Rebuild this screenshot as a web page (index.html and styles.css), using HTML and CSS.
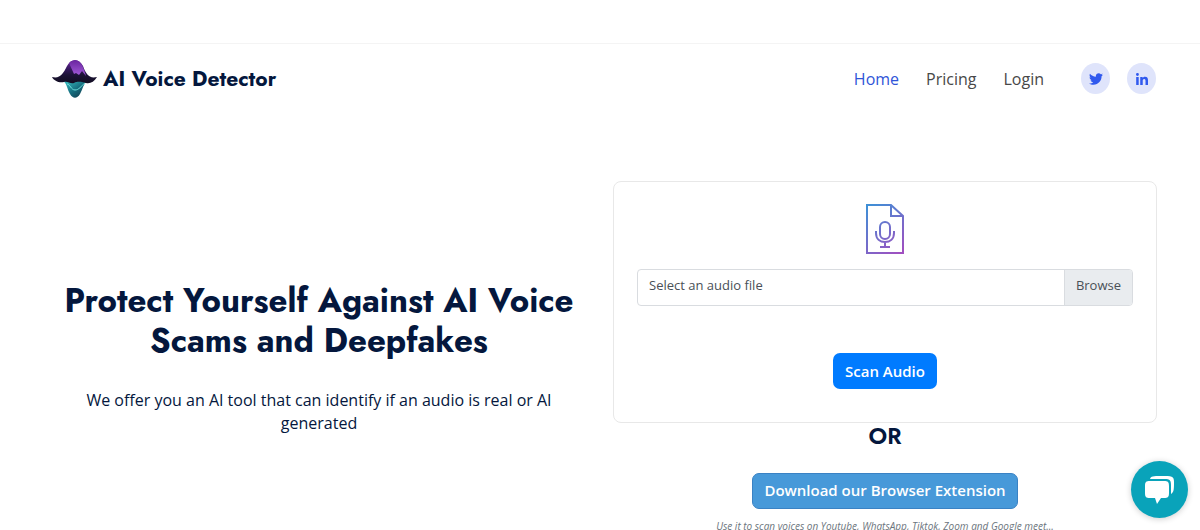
FILE: index.html
```html
<!DOCTYPE html>
<html lang="en">
<head>
  <meta charset="UTF-8" />
  <meta name="viewport" content="width=device-width, initial-scale=1.0" />
  <title>AI Voice Detector</title>
  <link rel="stylesheet" href="styles.css">
</head>
<body>
  <div class="topbar"></div>
  <header class="header">
    <a class="logo" href="#">
      <svg width="45" height="40" viewBox="0 0 45 40" aria-hidden="true">
        <defs>
          <linearGradient id="waveTop" x1="0" y1="0" x2="0" y2="1">
            <stop offset="0" stop-color="#6a259f" />
            <stop offset="0.4" stop-color="#34185c" />
            <stop offset="0.65" stop-color="#1c1336" />
            <stop offset="1" stop-color="#120d22" />
          </linearGradient>
          <linearGradient id="wavePeak" x1="0" y1="0" x2="0" y2="1">
            <stop offset="0" stop-color="#6a259f" />
            <stop offset="1" stop-color="#a45cdb" />
          </linearGradient>
          <linearGradient id="waveBottom" x1="0" y1="0" x2="1" y2="1">
            <stop offset="0" stop-color="#3fc9cb" />
            <stop offset="0.5" stop-color="#166f80" />
            <stop offset="1" stop-color="#102a3c" />
          </linearGradient>
        </defs>
        <path fill="url(#waveBottom)" d="M11 22 C15 24 15 30 18 35 C21 40 25 40 28 35 C31 30 31 24 37 21 Z" />
        <path fill="url(#waveTop)" d="M0 18 C8 20 11 15 15 7 C19 -1 27 -1 31 7 C34 15 37 20 45 18 C42 23 38 25 34 24 C29 23 26 22 22 24 C18 25 16 22 12 23 C7 24 2 22 0 18 Z" />
        <path fill="url(#wavePeak)" d="M17 4 C21 0 27 0 30 6 C32 10 33 14 34 17 L30 12 L27 16 L24 14 L22 15 Z" />
        <path fill="none" stroke="#6fe0dc" stroke-width="1" d="M15 25 C18 25 19 31 23 31 C27 31 29 27 33 24" />
      </svg>
      <span>AI Voice Detector</span>
    </a>
    <nav class="nav">
      <a class="nav-link active" href="#">Home</a>
      <a class="nav-link" href="#">Pricing</a>
      <a class="nav-link" href="#">Login</a>
    </nav>
    <div class="social">
      <a href="#" aria-label="Twitter">
        <svg width="14" height="14" viewBox="0 0 512 512" fill="currentColor"><path d="M459.4 151.7c.3 4.5.3 9.1.3 13.6 0 138.7-105.6 298.6-298.6 298.6-59.5 0-114.7-17.2-161.1-47.1 8.4 1 16.6 1.3 25.3 1.3 49.1 0 94.2-16.6 130.3-44.8-46.1-1-84.8-31.2-98.1-72.8 6.5 1 13 1.6 19.8 1.6 9.4 0 18.8-1.3 27.6-3.6-48.1-9.7-84.1-52-84.1-103v-1.3c14 7.8 30.2 12.7 47.4 13.3-28.3-18.8-46.8-51-46.8-87.4 0-19.5 5.2-37.4 14.3-53 51.7 63.7 129.3 105.3 216.4 109.8-1.6-7.8-2.6-15.9-2.6-24 0-57.8 46.8-104.9 104.9-104.9 30.2 0 57.5 12.7 76.7 33.1 23.7-4.5 46.5-13.3 66.6-25.3-7.8 24.4-24.4 44.8-46.1 57.8 21.1-2.3 41.6-8.1 60.4-16.2-14.3 20.8-32.2 39.3-52.6 54.3z" /></svg>
      </a>
      <a href="#" aria-label="LinkedIn">
        <svg width="12" height="12" viewBox="0 -32 448 448" fill="currentColor"><path d="M100 416H7V117h93zM54 76A54 54 0 1 1 54-32 54 54 0 0 1 54 76zM448 416h-93V270c0-35-1-79-48-79-49 0-56 38-56 77v148h-93V117h89v41h1c13-24 43-48 88-48 94 0 112 62 112 142z" /></svg>
      </a>
    </div>
  </header>

  <main class="hero">
    <section class="intro">
      <h1>Protect Yourself Against AI Voice Scams and Deepfakes</h1>
      <p>We offer you an AI tool that can identify if an audio is real or AI generated</p>
    </section>
    <section class="scan">
      <form class="card">
        <svg class="file-icon" width="38" height="50" viewBox="0 0 38 50" fill="none" stroke="url(#fileStroke)" stroke-width="2" aria-hidden="true">
          <defs>
            <linearGradient id="fileStroke" gradientUnits="userSpaceOnUse" x1="2" y1="2" x2="36" y2="48">
              <stop offset="0" stop-color="#3f8fd6" />
              <stop offset="1" stop-color="#a04fc0" />
            </linearGradient>
          </defs>
          <path d="M1 1H25L37 12V49H1ZM25 1V12H37" />
          <rect x="14" y="18" width="10" height="17" rx="5" />
          <path d="M10 27V29C10 35 14 38 19 38S28 35 28 29V27M19 38V43M14 43H24" />
        </svg>
        <input class="file-input" type="file" id="audioFile" accept="audio/*" />
        <label class="file-label" for="audioFile">
          <span class="file-name">Select an audio file</span>
          <span class="file-browse">Browse</span>
        </label>
        <button class="btn btn-scan" type="submit">Scan Audio</button>
      </form>
      <h2>OR</h2>
      <a class="btn btn-extension" href="#">Download our Browser Extension</a>
      <p class="note">Use it to scan voices on Youtube, WhatsApp, Tiktok, Zoom and Google meet...</p>
    </section>
  </main>

  <button class="chat" type="button" aria-label="Open chat">
    <svg width="32" height="30" viewBox="0 0 32 30" fill="#fff" aria-hidden="true">
      <path d="M6 4C7 1 9 1 17 1C28 1 30 1 30 7C30 14 30 17 27 19V10C27 4 25 4 18 4Z" />
      <path d="M6 6H20C24 6 25 7 25 11V18C25 22 24 23 20 23H17L13 29L11 23H6C2 23 1 22 1 18V11C1 7 2 6 6 6Z" />
    </svg>
  </button>
</body>
</html>
```
FILE: styles.css
```css
* {
  box-sizing: border-box;
}
body {
  margin: 0;
  font-family: "Open Sans", sans-serif;
  font-size: 16px;
  color: #444;
  background: #fff;
}
a {
  text-decoration: none;
}
h1, h2, p {
  margin: 0;
}

/* Header */
.topbar {
  height: 44px;
  border-bottom: 1px solid #f4f4f4;
}
.header {
  display: flex;
  align-items: center;
  height: 69px;
  padding: 0 44px 0 52px;
}
.logo {
  display: flex;
  align-items: center;
  gap: 6px;
  margin-right: auto;
  font-family: Jost, Lato, sans-serif;
  font-size: 21px;
  font-weight: 700;
  color: #04173d;
}
.nav {
  display: flex;
  gap: 27px;
}
.nav-link {
  color: #484848;
}
.nav-link.active {
  color: #2f55d8;
}
.social {
  display: flex;
  gap: 17px;
  margin-left: 37px;
}
.social a {
  display: flex;
  align-items: center;
  justify-content: center;
  width: 29px;
  height: 31px;
  border-radius: 50%;
  background: #dfe4fb;
  color: #3059ee;
}

/* Hero */
.hero {
  display: grid;
  grid-template-columns: 1fr 1fr;
  gap: 22px;
  align-items: center;
  padding: 68px 43px 0 47px;
  text-align: center;
}
.intro h1 {
  font-family: Jost, Lato, sans-serif;
  font-size: 33px;
  font-weight: 700;
  line-height: 40px;
  color: #04173d;
}
.intro p {
  margin-top: 28px;
  padding: 0 36px;
  line-height: 23px;
  color: #04173d;
}
.card {
  display: flex;
  flex-direction: column;
  align-items: center;
  position: relative;
  padding: 22px 23px 33px;
  border: 1px solid #e8e8e8;
  border-radius: 8px;
}
.file-icon {
  margin-bottom: 15px;
}
.file-input {
  position: absolute;
  width: 1px;
  height: 1px;
  opacity: 0;
}
.file-label {
  display: flex;
  width: 100%;
  height: 37px;
  border: 1px solid #d9dce0;
  border-radius: 4px;
  overflow: hidden;
  font-size: 13px;
  line-height: 31px;
  color: #495057;
}
.file-name {
  flex: 1;
  padding-left: 11px;
  text-align: left;
}
.file-browse {
  padding: 0 11px;
  border-left: 1px solid #d9dce0;
  background: #e9ecef;
}
.btn {
  display: inline-block;
  height: 36px;
  padding: 0 11px;
  border: 1px solid transparent;
  border-radius: 7px;
  font-family: inherit;
  font-size: 15px;
  font-weight: 600;
  line-height: 33px;
  color: #fff;
}
.btn-scan {
  margin-top: 47px;
  background: #007bff;
}
.scan h2 {
  font-family: Jost, Lato, sans-serif;
  font-size: 23px;
  font-weight: 600;
  line-height: 26px;
  color: #04173d;
}
.btn-extension {
  margin-top: 24px;
  border-color: #3a82c4;
  background: #4799d9;
}
.note {
  margin-top: 8px;
  font-size: 10px;
  font-style: italic;
  line-height: 18px;
  color: #6c757d;
}

/* Chat bubble */
.chat {
  position: fixed;
  right: 12px;
  bottom: 12px;
  display: flex;
  align-items: center;
  justify-content: center;
  width: 57px;
  height: 57px;
  padding: 0;
  border: 0;
  border-radius: 50%;
  background: #09a3ba;
  box-shadow: 0 1px 6px rgba(0, 0, 0, 0.2);
}
```
